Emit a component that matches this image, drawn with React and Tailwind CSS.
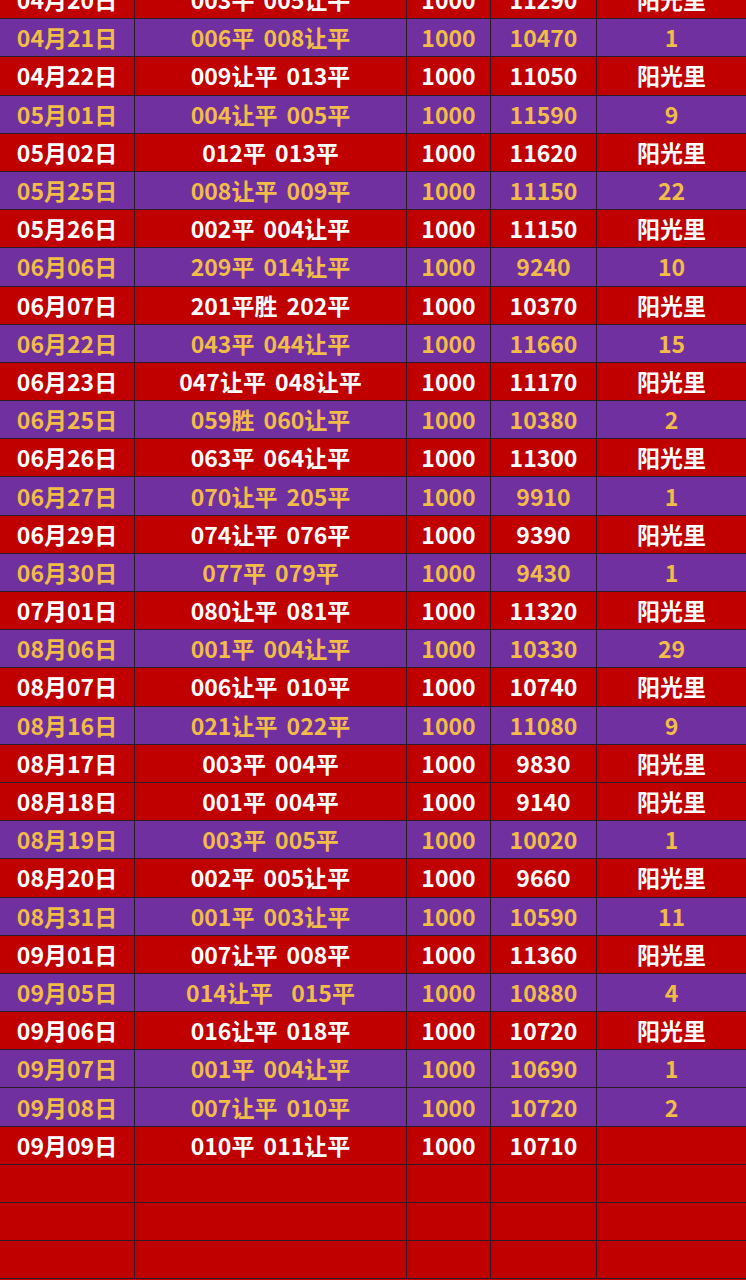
import React from 'react';

const rows = [
    ['04月20日', '003平 005让平', '11290', '阳光里', 'r'],
    ['04月21日', '006平 008让平', '10470', '1', 'p'],
    ['04月22日', '009让平 013平', '11050', '阳光里', 'r'],
    ['05月01日', '004让平 005平', '11590', '9', 'p'],
    ['05月02日', '012平 013平', '11620', '阳光里', 'r'],
    ['05月25日', '008让平 009平', '11150', '22', 'p'],
    ['05月26日', '002平 004让平', '11150', '阳光里', 'r'],
    ['06月06日', '209平 014让平', '9240', '10', 'p'],
    ['06月07日', '201平胜 202平', '10370', '阳光里', 'r'],
    ['06月22日', '043平 044让平', '11660', '15', 'p'],
    ['06月23日', '047让平 048让平', '11170', '阳光里', 'r'],
    ['06月25日', '059胜 060让平', '10380', '2', 'p'],
    ['06月26日', '063平 064让平', '11300', '阳光里', 'r'],
    ['06月27日', '070让平 205平', '9910', '1', 'p'],
    ['06月29日', '074让平 076平', '9390', '阳光里', 'r'],
    ['06月30日', '077平 079平', '9430', '1', 'p'],
    ['07月01日', '080让平 081平', '11320', '阳光里', 'r'],
    ['08月06日', '001平 004让平', '10330', '29', 'p'],
    ['08月07日', '006让平 010平', '10740', '阳光里', 'r'],
    ['08月16日', '021让平 022平', '11080', '9', 'p'],
    ['08月17日', '003平 004平', '9830', '阳光里', 'r'],
    ['08月18日', '001平 004平', '9140', '阳光里', 'r'],
    ['08月19日', '003平 005平', '10020', '1', 'p'],
    ['08月20日', '002平 005让平', '9660', '阳光里', 'r'],
    ['08月31日', '001平 003让平', '10590', '11', 'p'],
    ['09月01日', '007让平 008平', '11360', '阳光里', 'r'],
    ['09月05日', '014让平  015平', '10880', '4', 'p'],
    ['09月06日', '016让平 018平', '10720', '阳光里', 'r'],
    ['09月07日', '001平 004让平', '10690', '1', 'p'],
    ['09月08日', '007让平 010平', '10720', '2', 'p'],
    ['09月09日', '010平 011让平', '10710', '', 'r'],
    ['', '', '', '', 'r', true],
    ['', '', '', '', 'r', true],
    ['', '', '', '', 'r', true],
];

const cell = 'flex items-center justify-center h-full border-r border-[#2b1a22] whitespace-pre';

export default function App() {
    return (
        <div className="w-[746px] h-[1280px] overflow-hidden bg-[#c00000]">
            <div
                className="-mt-[19px] font-bold text-[23px] leading-none"
                style={{ fontFamily: '"Noto Sans CJK SC", "Noto Sans", sans-serif' }}
            >
                {rows.map(([date, picks, total, note, kind, empty], i) => (
                    <div
                        key={i}
                        className={`flex h-[38.2px] border-b border-[#2b1a22] ${
                            kind === 'p' ? 'bg-[#7030a0] text-[#f2bc48]' : 'bg-[#c00000] text-white'
                        }`}
                    >
                        <div className={`${cell} w-[135px]`}>{date}</div>
                        <div className={`${cell} w-[272px] [word-spacing:4px]`}>{picks}</div>
                        <div className={`${cell} w-[84px]`}>{empty ? '' : '1000'}</div>
                        <div className={`${cell} w-[106px]`}>{total}</div>
                        <div className="flex items-center justify-center h-full flex-1">{note}</div>
                    </div>
                ))}
            </div>
        </div>
    );
}
